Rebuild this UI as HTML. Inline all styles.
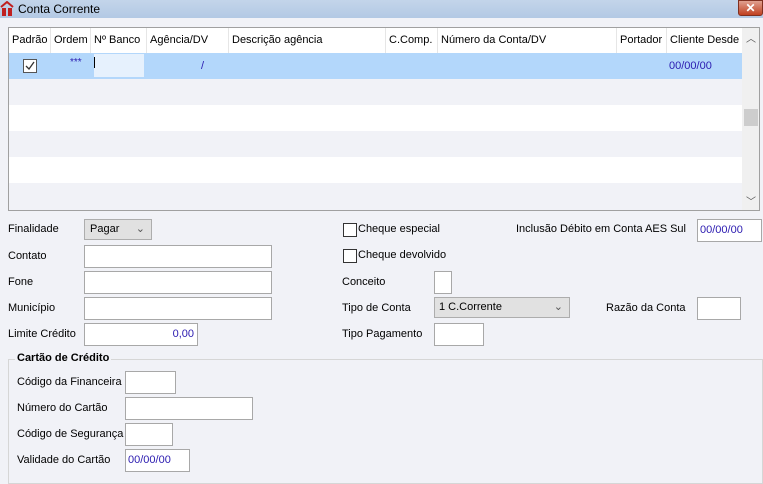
<!DOCTYPE html>
<html><head><meta charset="utf-8"><style>
*{box-sizing:border-box;margin:0;padding:0}
body{width:763px;height:482px;background:#f1f2f7;font-family:"Liberation Sans",sans-serif;font-size:11px;color:#000;position:relative;overflow:hidden}
.a{position:absolute;white-space:nowrap}
.inp{position:absolute;background:#fff;border:1px solid #a8a8a8;height:23px}
.blue{color:#2a1ab0}
.hd{position:absolute;top:28px;height:25px;line-height:25px;border-right:1px solid #e6e6e6;padding-left:3px;overflow:hidden}
.cb{position:absolute;width:14px;height:14px;border:1px solid #333;background:#fff}
</style></head><body>
<div class="a" style="left:0;top:0;width:763px;height:18px;background:linear-gradient(#c3d5ea,#b3c9e4)"></div>
<div class="a" style="left:0;top:1px;width:14px;height:15px;">
<svg width="14" height="15"><path d="M1 6 L7 1 L13 6" stroke="#c02020" stroke-width="2" fill="none"/><rect x="2" y="7" width="4" height="8" fill="#c02020"/><rect x="8" y="7" width="4" height="8" fill="#c02020"/></svg></div>
<div class="a" style="left:18px;top:1px;font-size:12px;line-height:16px">Conta Corrente</div>
<div class="a" style="left:738px;top:0;width:25px;height:16px;background:linear-gradient(#e0a090,#c04020);border:1px solid #803020;border-radius:0 0 3px 3px;color:#fff;text-align:center;font-weight:bold;line-height:14px;font-size:12px">✕</div>

<div class="a" style="left:8px;top:27px;width:752px;height:184px;border:1px solid #a0a0a0;background:#fff"></div>
<div class="a" style="left:9px;top:53px;width:733px;height:26px;background:#b3d7fb"></div>
<div class="a" style="left:9px;top:79px;width:733px;height:26px;background:#f1f2f7"></div>
<div class="a" style="left:9px;top:131px;width:733px;height:26px;background:#f1f2f7"></div>
<div class="a" style="left:9px;top:183px;width:733px;height:27px;background:#f1f2f7"></div>
<div class="hd" style="left:9px;width:42px">Padrão</div>
<div class="hd" style="left:51px;width:40px">Ordem</div>
<div class="hd" style="left:91px;width:56px">Nº Banco</div>
<div class="hd" style="left:147px;width:82px">Agência/DV</div>
<div class="hd" style="left:229px;width:157px">Descrição agência</div>
<div class="hd" style="left:386px;width:52px">C.Comp.</div>
<div class="hd" style="left:438px;width:179px">Número da Conta/DV</div>
<div class="hd" style="left:617px;width:50px">Portador</div>
<div class="hd" style="left:667px;width:75px;border:none">Cliente Desde</div>
<div class="cb" style="left:23px;top:59px;border-color:#555"><svg width="12" height="12" style="position:absolute;left:0;top:0"><path d="M2 6 L5 9 L10 2" stroke="#333" stroke-width="1.3" fill="none"/></svg></div>
<div class="a blue" style="left:70px;top:57px;font-size:10px">***</div>
<div class="a" style="left:94px;top:54px;width:50px;height:23px;background:#e6f1fd"></div>
<div class="a" style="left:94px;top:57px;width:1px;height:11px;background:#000"></div>
<div class="a blue" style="left:201px;top:60px">/</div>
<div class="a blue" style="left:669px;top:60px">00/00/00</div>
<div class="a" style="left:742px;top:28px;width:17px;height:182px;background:#f0f0f0"></div>
<div class="a" style="left:744px;top:109px;width:14px;height:17px;background:#cdcdcd"></div>
<div class="a" style="left:746px;top:30px;color:#555;font-size:10px">︿</div>
<div class="a" style="left:746px;top:193px;color:#555;font-size:10px">﹀</div>

<div class="a" style="left:8px;top:223px">Finalidade</div>
<div class="a" style="left:84px;top:219px;width:68px;height:21px;background:#e1e1e1;border:1px solid #adadad;padding-left:5px;line-height:19px">Pagar<span style="position:absolute;right:6px;color:#555">⌄</span></div>
<div class="a" style="left:8px;top:250px">Contato</div>
<div class="inp" style="left:84px;top:245px;width:188px"></div>
<div class="a" style="left:8px;top:276px">Fone</div>
<div class="inp" style="left:84px;top:271px;width:188px"></div>
<div class="a" style="left:8px;top:302px">Município</div>
<div class="inp" style="left:84px;top:297px;width:188px"></div>
<div class="a" style="left:8px;top:328px">Limite Crédito</div>
<div class="inp blue" style="left:84px;top:323px;width:114px;text-align:right;padding-right:3px;line-height:21px">0,00</div>

<div class="cb" style="left:343px;top:223px"></div>
<div class="a" style="left:358px;top:223px">Cheque especial</div>
<div class="cb" style="left:343px;top:249px"></div>
<div class="a" style="left:358px;top:249px">Cheque devolvido</div>
<div class="a" style="left:342px;top:276px">Conceito</div>
<div class="inp" style="left:434px;top:271px;width:18px"></div>
<div class="a" style="left:342px;top:302px">Tipo de Conta</div>
<div class="a" style="left:434px;top:297px;width:136px;height:21px;background:#e1e1e1;border:1px solid #adadad;padding-left:4px;line-height:19px">1 C.Corrente<span style="position:absolute;right:6px;color:#555">⌄</span></div>
<div class="a" style="left:342px;top:328px">Tipo Pagamento</div>
<div class="inp" style="left:434px;top:323px;width:50px"></div>
<div class="a" style="left:516px;top:223px">Inclusão Débito em Conta AES Sul</div>
<div class="inp blue" style="left:697px;top:219px;width:65px;padding-left:2px;line-height:21px">00/00/00</div>
<div class="a" style="left:606px;top:302px">Razão da Conta</div>
<div class="inp" style="left:697px;top:297px;width:44px"></div>

<div class="a" style="left:8px;top:359px;width:755px;height:125px;border:1px solid #d6d6d6"></div>
<div class="a" style="left:15px;top:352px;background:#f1f2f7;padding:0 2px;font-weight:bold">Cartão de Crédito</div>
<div class="a" style="left:17px;top:376px">Código da Financeira</div>
<div class="inp" style="left:125px;top:371px;width:51px"></div>
<div class="a" style="left:17px;top:402px">Número do Cartão</div>
<div class="inp" style="left:125px;top:397px;width:128px"></div>
<div class="a" style="left:17px;top:428px">Código de Segurança</div>
<div class="inp" style="left:125px;top:423px;width:48px"></div>
<div class="a" style="left:17px;top:454px">Validade do Cartão</div>
<div class="inp blue" style="left:125px;top:449px;width:65px;padding-left:2px;line-height:21px">00/00/00</div>
</body></html>
